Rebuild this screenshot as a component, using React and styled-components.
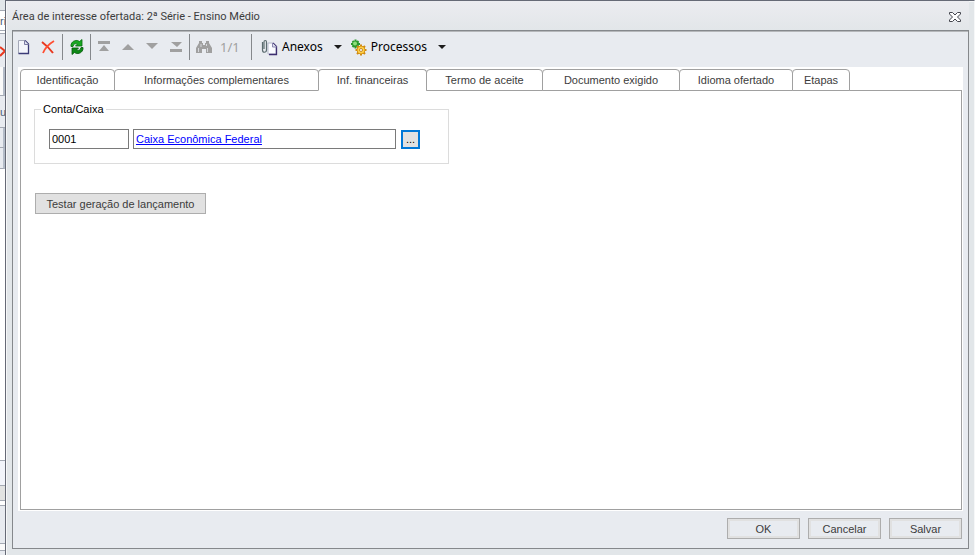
import React, { useState } from 'react';
import styled, { createGlobalStyle } from 'styled-components';

const tabs = [
  { label: 'Identificação', width: 95 },
  { label: 'Informações complementares', width: 205 },
  { label: 'Inf. financeiras', width: 109 },
  { label: 'Termo de aceite', width: 117 },
  { label: 'Documento exigido', width: 138 },
  { label: 'Idioma ofertado', width: 114 },
  { label: 'Etapas', width: 58 },
];

const NewIcon = () => (
  <svg width="16" height="16" viewBox="0 0 16 16">
    <path d="M3 2h6l4 4v9H3z" fill="#f4f6fc" />
    <path d="M2.500 14.500V1.500H9" fill="none" stroke="#a4a8b8" />
    <path d="M9 1.500 12.500 5v9.500H2.500" fill="none" stroke="#3c3c78" strokeWidth="1.300" />
    <path d="M8.500 1.500V5.500h4" fill="#dfe3f2" stroke="#7c7ca4" />
  </svg>
);

const DeleteIcon = () => (
  <svg width="16" height="16" viewBox="0 0 16 16">
    <path d="M2 3c4 3 8 7 11 11" fill="none" stroke="#e8381f" strokeWidth="2" />
    <path d="M14 2C9 5 5 9 3 14" fill="none" stroke="#ff4e32" strokeWidth="1.800" />
  </svg>
);

const RefreshIcon = () => (
  <svg width="16" height="16" viewBox="0 0 16 16">
    <path
      d="M2 7.500C1.500 4 4.500 1 8.500 1.500L10.500 2.500 13 .5V7H6.500L8.500 5C6.500 4 4.500 5 4 7.500z"
      fill="#18a821"
      stroke="#056b0c"
      strokeWidth=".8"
    />
    <path
      d="M14 8.500C14.500 12 11.500 15 7.500 14.500L5.500 13.500 3 15.500V9H9.500L7.500 11C9.500 12 11.500 11 12 8.500z"
      fill="#0c8a15"
      stroke="#04570a"
      strokeWidth=".8"
    />
  </svg>
);

const FirstIcon = () => (
  <svg width="14" height="14" viewBox="0 0 14 14">
    <path d="M1 1h12v3H1zM7 5l5 6H2z" fill="#a0a0a0" />
  </svg>
);

const PreviousIcon = () => (
  <svg width="14" height="14" viewBox="0 0 14 14">
    <path d="M7 4l6 6H1z" fill="#a0a0a0" />
  </svg>
);

const NextIcon = () => (
  <svg width="14" height="14" viewBox="0 0 14 14">
    <path d="M1 3h12l-6 6z" fill="#a0a0a0" />
  </svg>
);

const LastIcon = () => (
  <svg width="14" height="14" viewBox="0 0 14 14">
    <path d="M2 2h11l-5 5zM1 9h12v3H1z" fill="#a0a0a0" />
  </svg>
);

const SearchIcon = () => (
  <svg width="16" height="16" viewBox="0 0 16 16">
    <path d="M3 2h3v2h1v2h2V4h1V2h3v2l3 5v5h-6v-4H6v4H0V9l3-5z" fill="#a0a0a0" />
    <path d="M2.500 9v4M5 5v3M11.500 9v4M10.500 5v2" stroke="#d6d8dc" />
  </svg>
);

const ClipIcon = () => (
  <svg width="17" height="17" viewBox="0 0 17 17">
    <path d="M7 4h5l3 3v8H7z" fill="#fafbff" stroke="#b4b8ca" />
    <path d="M12 4 15.500 7.500V15.500H8" fill="none" stroke="#3e2f70" strokeWidth="1.300" />
    <path d="M11.500 4v4h4" fill="#dfe1f0" stroke="#8a88b0" />
    <path d="M1.500 3v8c0 3 4 3 4 0V3c0-2-2.500-2-2.500 0v7" fill="none" stroke="#5c6c70" strokeWidth="1.200" />
  </svg>
);

const GearsIcon = () => (
  <svg width="17" height="17" viewBox="0 0 17 17">
    <g fill="#2fae30" stroke="#2c9a2e" strokeWidth="1">
      <circle cx="5.500" cy="5" r="3" />
      <path d="M5.500 .5v9M1 5h9M2.500 2l6 6M8.500 2l-6 6" strokeWidth="2" />
    </g>
    <circle cx="5" cy="4.500" r="2" fill="#8ee07c" />
    <g fill="#e9aa19" stroke="#cf8a12" strokeWidth="1">
      <circle cx="11" cy="11" r="4" />
      <path d="M11 5.500v11M5.500 11h11M7 7l8 8M15 7l-8 8" strokeWidth="2" />
    </g>
    <circle cx="11" cy="11" r="3.500" fill="#ffcf45" />
    <circle cx="11" cy="11" r="1.500" fill="#fff" stroke="#a76509" strokeWidth=".7" />
  </svg>
);

const ArrowIcon = () => (
  <svg width="8" height="4" viewBox="0 0 8 4">
    <path d="M0 0h8L4 4z" fill="#1c1c1c" />
  </svg>
);

const CloseIcon = () => (
  <svg width="12" height="10" viewBox="0 0 12 10">
    <path
      d="M.5.5h3L6 3 8.500.5h3v1.500L8.500 5l3 3v1.500h-3L6 7 3.500 9.500h-3V8l3-3-3-3z"
      fill="#fff"
      stroke="#44464e"
    />
  </svg>
);

const App = () => {
  const [activeTab, setActiveTab] = useState('Inf. financeiras');
  const [code, setCode] = useState('0001');

  return (
    <Desktop>
      <GlobalStyle />
      <Backdrop aria-hidden="true">
        <BackRow $height={11} $color="#e2e6e9" />
        <BackRow $height={20} $color="#ffffff">ri</BackRow>
        <BackRow $height={3} $color="#ffffff" />
        <BackRow $height={33} $color="#e8ebf0" $plain>
          <svg width="6" height="14" viewBox="0 0 6 14">
            <path d="M0 3l5 4-5 5" fill="none" stroke="#e8381f" strokeWidth="2" />
          </svg>
        </BackRow>
        <BackRow $height={29} $color="#fafafa" $grip />
        <BackRow $height={32} $color="#e8ebf0">u</BackRow>
        <BackRow $height={20} $color="#e8ebf0" $grip />
        <BackRow $height={21} $color="#e8ebf0" $grip />
        <BackSpace />
        <BackRow $height={25} $color="#f2f4fa" />
        <BackRow $height={15} $color="#e2e3e2" />
        <BackRow $height={5} $color="#ffffff" />
        <BackRow $height={38} $color="#e8ebf0" />
        <BackRow $height={7} $color="#fafafa" />
        <BackRow $height={4} $color="#e8ebf0" $plain />
      </Backdrop>
      <Dialog role="dialog" aria-labelledby="dialog-title">
        <TitleBar>
          <Title id="dialog-title">Área de interesse ofertada: 2ª Série - Ensino Médio</Title>
          <IconButton type="button" aria-label="Fechar" $width={28}>
            <CloseIcon />
          </IconButton>
        </TitleBar>
        <Content>
          <Toolbar role="toolbar">
            <IconButton type="button" aria-label="Novo" $width={22}><NewIcon /></IconButton>
            <IconButton type="button" aria-label="Excluir" $width={26}><DeleteIcon /></IconButton>
            <Separator />
            <IconButton type="button" aria-label="Atualizar" $width={25}><RefreshIcon /></IconButton>
            <Separator />
            <IconButton type="button" aria-label="Primeiro" $width={24}><FirstIcon /></IconButton>
            <IconButton type="button" aria-label="Anterior" $width={24}><PreviousIcon /></IconButton>
            <IconButton type="button" aria-label="Próximo" $width={24}><NextIcon /></IconButton>
            <IconButton type="button" aria-label="Último" $width={24}><LastIcon /></IconButton>
            <Separator />
            <IconButton type="button" aria-label="Localizar" $width={26}><SearchIcon /></IconButton>
            <Counter>1/1</Counter>
            <Separator />
            <MenuButton type="button">
              <ClipIcon />
              <span>Anexos</span>
              <ArrowIcon />
            </MenuButton>
            <MenuButton type="button">
              <GearsIcon />
              <span>Processos</span>
              <ArrowIcon />
            </MenuButton>
          </Toolbar>
          <TabArea>
            <TabList role="tablist">
              {tabs.map((tab) => (
                <Tab
                  key={tab.label}
                  type="button"
                  role="tab"
                  aria-selected={tab.label === activeTab}
                  $active={tab.label === activeTab}
                  $width={tab.width}
                  onClick={() => setActiveTab(tab.label)}
                >
                  {tab.label}
                </Tab>
              ))}
            </TabList>
            <Panel role="tabpanel">
              <Group>
                <Legend>Conta/Caixa</Legend>
                <CodeInput
                  aria-label="Código da conta/caixa"
                  value={code}
                  onChange={(e) => setCode(e.target.value)}
                />
                <LinkField>
                  <a href="#conta">Caixa Econômica Federal</a>
                </LinkField>
                <BrowseButton type="button" aria-label="Procurar">...</BrowseButton>
              </Group>
              <TestButton type="button">Testar geração de lançamento</TestButton>
            </Panel>
          </TabArea>
          <Footer>
            <FooterButton type="button">OK</FooterButton>
            <FooterButton type="button">Cancelar</FooterButton>
            <FooterButton type="button">Salvar</FooterButton>
          </Footer>
        </Content>
      </Dialog>
    </Desktop>
  );
};

export default App;

const GlobalStyle = createGlobalStyle`
  * {
    box-sizing: border-box;
  }

  body {
    margin: 0;
    background: #e2e6e9;
    color: #3c3c3c;
    font-family: 'Liberation Sans', Arial, sans-serif;
    font-size: 11px;
    line-height: 14px;
  }

  button,
  input {
    margin: 0;
    padding: 0;
    color: inherit;
    font: inherit;
  }

  svg {
    display: block;
    flex: none;
  }
`;

const Desktop = styled.div`
  display: flex;
  min-height: 100vh;
`;

const Backdrop = styled.div`
  display: flex;
  flex-direction: column;
  flex: none;
  width: 5px;
  overflow: hidden;
  background: #fff;
`;

const BackRow = styled.div`
  display: flex;
  align-items: center;
  flex: none;
  height: ${({ $height }) => $height}px;
  color: #4a6078;
  background: ${({ $color }) => $color};
  border-bottom: ${({ $plain }) => ($plain ? 'none' : '1px solid #a4a9b3')};
  border-right: ${({ $grip }) => ($grip ? '2px solid #b4bcc8' : 'none')};
`;

const BackSpace = styled.div`
  flex: 1;
  border-bottom: 1px solid #a4a9b3;
`;

const Dialog = styled.section`
  display: flex;
  flex-direction: column;
  flex: 1;
  min-width: 0;
  padding: 0 5px 6px 6px;
  background: #e2e6e9;
  border-top: 1px solid #666a76;
  border-left: 1px solid #666a76;
  border-right: 1px solid #f6f7f8;
  box-shadow: inset 1px 1px 0 #f6f7f8;
`;

const TitleBar = styled.header`
  display: flex;
  align-items: center;
  justify-content: space-between;
  height: 29px;
  margin-left: -5px;
  padding: 3px 0 0 5px;
  background: linear-gradient(#ececf0, #e2e6e9);
`;

const Title = styled.h1`
  margin: 0;
  font-family: Roboto, sans-serif;
  font-size: 11px;
  font-weight: 400;
`;

const Content = styled.div`
  display: flex;
  flex-direction: column;
  flex: 1;
  background: #e8ebf0;
  border: 1px solid #85888c;
`;

const Toolbar = styled.div`
  display: flex;
  align-items: center;
  height: 36px;
  padding-bottom: 5px;
  border-top: 1px solid #b5b7ba;
  font-family: 'Noto Sans', sans-serif;
  font-size: 12px;
`;

const IconButton = styled.button`
  display: flex;
  align-items: center;
  justify-content: center;
  width: ${({ $width }) => $width}px;
  height: 24px;
  background: none;
  border: none;
`;

const Separator = styled.div`
  width: 1px;
  height: 26px;
  margin: 0 1px;
  background: #85888c;
`;

const Counter = styled.span`
  width: 33px;
  padding-left: 3px;
  color: #a0a0a0;
  font-size: 13px;
`;

const MenuButton = styled.button`
  display: flex;
  align-items: center;
  gap: 4px;
  height: 26px;
  padding-left: 8px;
  color: #000;
  background: none;
  border: none;

  span {
    margin-right: 7px;
  }
`;

const TabArea = styled.div`
  display: flex;
  flex-direction: column;
  flex: 1;
  margin: 0 5px;
  padding: 2px 1px 1px 2px;
  background: #fff;
`;

const TabList = styled.div`
  display: flex;
`;

const Tab = styled.button`
  width: ${({ $width }) => $width}px;
  height: 22px;
  background: #fff;
  border: 1px solid #a0a0a0;
  border-bottom-color: ${({ $active }) => ($active ? '#fff' : '#a0a0a0')};
  border-radius: 4px 4px 0 0;
  z-index: 1;

  & + & {
    margin-left: -1px;
  }
`;

const Panel = styled.div`
  display: flex;
  flex-direction: column;
  align-items: flex-start;
  gap: 29px;
  flex: 1;
  margin-top: -1px;
  padding: 11px 13px;
  border: 1px solid #a0a0a0;
`;

const Group = styled.fieldset`
  display: flex;
  align-items: center;
  width: 415px;
  margin: 0;
  padding: 13px 14px 14px;
  border: 1px solid #dcdcdc;
`;

const Legend = styled.legend`
  margin-left: -8px;
  padding: 0 2px;
  color: #000;
`;

const CodeInput = styled.input`
  width: 80px;
  height: 20px;
  margin-right: 4px;
  padding: 0 2px;
  color: #000;
  background: #fff;
  border: 1px solid #7a7a7a;
`;

const LinkField = styled.div`
  flex: 1;
  height: 20px;
  margin-right: 5px;
  padding: 2px;
  border: 1px solid #7a7a7a;

  a {
    color: #0000ff;
  }
`;

const BrowseButton = styled.button`
  width: 19px;
  height: 19px;
  margin-right: 14px;
  color: #000;
  background: #e1e1e1;
  border: 2px solid #0078d7;
`;

const TestButton = styled.button`
  width: 171px;
  height: 21px;
  margin-left: 1px;
  background: #e1e1e1;
  border: 1px solid #adadad;
`;

const Footer = styled.footer`
  display: flex;
  justify-content: flex-end;
  gap: 8px;
  padding: 7px 6px 9px;
`;

const FooterButton = styled.button`
  width: 73px;
  height: 21px;
  background: #e8ebf0;
  border: 1px solid #adadad;
  box-shadow: inset 0 0 0 2px #e1e1e1;
`;
